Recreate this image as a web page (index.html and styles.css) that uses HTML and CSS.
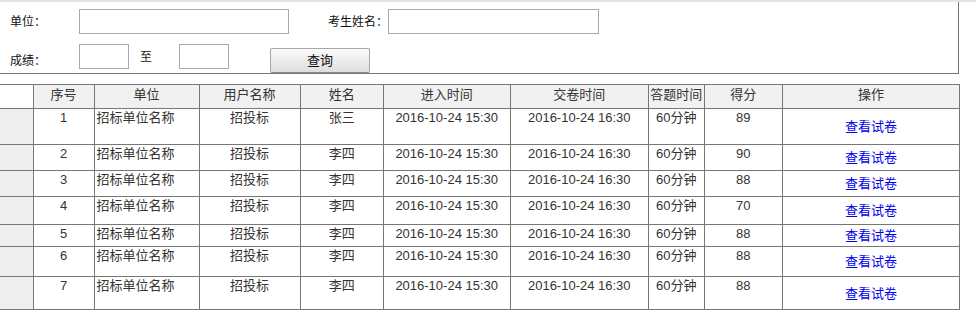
FILE: index.html
```html
<!DOCTYPE html>
<html lang="zh-CN">
<head>
<meta charset="utf-8">
<title>成绩查询</title>
<link rel="stylesheet" href="styles.css">
</head>
<body>
<div class="panel">
  <div class="frow">
    <span class="lbl">单位：</span>
    <input class="inp inp-wide" type="text">
    <span class="lbl lbl-name">考生姓名：</span>
    <input class="inp inp-name" type="text">
  </div>
  <div class="frow frow2">
    <span class="lbl lbl-low">成绩：</span>
    <input class="inp inp-small" type="text">
    <span class="to">至</span>
    <input class="inp inp-small" type="text">
    <button class="btn" type="button">查询</button>
  </div>
</div>
<table class="grid">
  <colgroup>
    <col class="c0"><col class="c1"><col class="c2"><col class="c3"><col class="c4">
    <col class="c5"><col class="c6"><col class="c7"><col class="c8"><col class="c9">
  </colgroup>
  <thead>
    <tr class="hrow">
      <th class="side"></th><th>序号</th><th>单位</th><th>用户名称</th><th>姓名</th>
      <th>进入时间</th><th>交卷时间</th><th>答题时间</th><th>得分</th><th>操作</th>
    </tr>
  </thead>
  <tbody>
    <tr class="r1"><td class="side"></td><td>1</td><td class="left">招标单位名称</td><td>招投标</td><td>张三</td><td>2016-10-24 15:30</td><td>2016-10-24 16:30</td><td>60分钟</td><td>89</td><td class="op"><a href="#">查看试卷</a></td></tr>
    <tr class="r2"><td class="side"></td><td>2</td><td class="left">招标单位名称</td><td>招投标</td><td>李四</td><td>2016-10-24 15:30</td><td>2016-10-24 16:30</td><td>60分钟</td><td>90</td><td class="op"><a href="#">查看试卷</a></td></tr>
    <tr class="r3"><td class="side"></td><td>3</td><td class="left">招标单位名称</td><td>招投标</td><td>李四</td><td>2016-10-24 15:30</td><td>2016-10-24 16:30</td><td>60分钟</td><td>88</td><td class="op"><a href="#">查看试卷</a></td></tr>
    <tr class="r4"><td class="side"></td><td>4</td><td class="left">招标单位名称</td><td>招投标</td><td>李四</td><td>2016-10-24 15:30</td><td>2016-10-24 16:30</td><td>60分钟</td><td>70</td><td class="op"><a href="#">查看试卷</a></td></tr>
    <tr class="r5"><td class="side"></td><td>5</td><td class="left">招标单位名称</td><td>招投标</td><td>李四</td><td>2016-10-24 15:30</td><td>2016-10-24 16:30</td><td>60分钟</td><td>88</td><td class="op"><a href="#">查看试卷</a></td></tr>
    <tr class="r6"><td class="side"></td><td>6</td><td class="left">招标单位名称</td><td>招投标</td><td>李四</td><td>2016-10-24 15:30</td><td>2016-10-24 16:30</td><td>60分钟</td><td>88</td><td class="op"><a href="#">查看试卷</a></td></tr>
    <tr class="r7"><td class="side"></td><td>7</td><td class="left">招标单位名称</td><td>招投标</td><td>李四</td><td>2016-10-24 15:30</td><td>2016-10-24 16:30</td><td>60分钟</td><td>88</td><td class="op"><a href="#">查看试卷</a></td></tr>
  </tbody>
</table>
</body>
</html>
```
FILE: styles.css
```css
html, body {
  margin: 0;
  padding: 0;
  background: #fff;
}
body {
  border-top: 2px solid #e4e4e4;
  font-family: "Liberation Sans", "Noto Sans CJK SC", sans-serif;
  font-size: 13px;
  color: #222;
}
.panel {
  box-sizing: border-box;
  width: 959px;
  height: 72px;
  border-right: 1px solid #777;
  border-bottom: 1px solid #777;
  padding: 7px 0 0 10px;
}
.frow {
  display: flex;
  align-items: center;
  height: 25px;
}
.frow2 {
  margin-top: 10px;
  align-items: flex-start;
}
.lbl {
  font-size: 12px;
  color: #111;
  width: 69px;
  line-height: 14px;
}
.lbl-name {
  width: 99px;
  text-align: right;
}
.lbl-low {
  padding-top: 10px;
}
.inp {
  box-sizing: border-box;
  height: 25px;
  border: 1px solid #a9a9a9;
  margin: 0;
  padding: 0 3px;
  background: #fff;
  outline: none;
}
.inp-wide { width: 210px; }
.inp-name { width: 211px; }
.inp-small { width: 50px; }
.to {
  font-size: 12px;
  line-height: 14px;
  padding-top: 6px;
  width: 50px;
  box-sizing: border-box;
  padding-left: 11px;
}
.btn {
  box-sizing: border-box;
  margin: 4px 0 0 41px;
  width: 100px;
  height: 25px;
  border: 1px solid #a8a8a8;
  border-bottom-color: #8a8a8a;
  border-radius: 2px;
  background: linear-gradient(#fbfbfb, #dedede);
  font-family: "Liberation Sans", "Noto Sans CJK SC", sans-serif;
  font-size: 13px;
  color: #111;
  padding: 0;
  line-height: 22px;
}
.grid {
  margin-top: 10px;
  border-collapse: collapse;
  table-layout: fixed;
  width: 960px;
  color: #333;
}
.c0 { width: 33px; }
.c1 { width: 61px; }
.c2 { width: 105px; }
.c3 { width: 101px; }
.c4 { width: 83px; }
.c5 { width: 127px; }
.c6 { width: 138px; }
.c7 { width: 56px; }
.c8 { width: 78px; }
.c9 { width: 177px; }
.grid th, .grid td {
  border: 1px solid #777;
  padding: 1px 0 0;
  text-align: center;
  vertical-align: top;
  line-height: 15px;
  font-weight: normal;
  white-space: nowrap;
  overflow: hidden;
}
.grid th {
  background: #f1f1f1;
  color: #333;
  padding-top: 2px;
}
.grid th.side {
  background: #fff;
}
.grid .side {
  border-left: none;
  background: #efefef;
}
.grid td.left {
  text-align: left;
  padding-left: 2px;
}
.grid td.op {
  vertical-align: middle;
  padding-top: 0;
}
.grid td.op a {
  color: #0000ee;
  text-decoration: none;
}
.hrow { height: 24px; }
.r1 { height: 36px; }
.r2 { height: 26px; }
.r3 { height: 26px; }
.r4 { height: 28px; }
.r5 { height: 22px; }
.r6 { height: 30px; }
.r7 { height: 33px; }
```
